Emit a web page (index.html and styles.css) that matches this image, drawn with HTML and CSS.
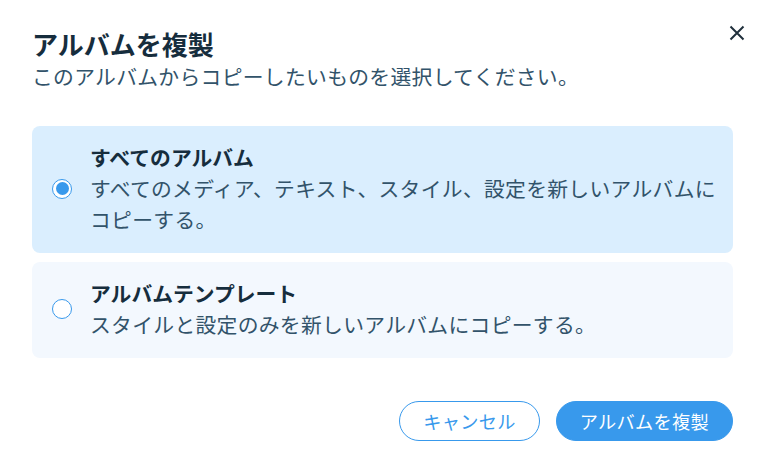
FILE: index.html
```html
<!DOCTYPE html>
<html lang="ja">
<head>
    <meta charset="UTF-8">
    <meta name="viewport" content="width=device-width, initial-scale=1.0">
    <title>アルバムを複製</title>
    <link rel="stylesheet" href="styles.css">
</head>
<body>

    <div class="dialog">
        <!-- Header -->
        <div class="dialog-header">
            <div class="header-text">
                <h1 class="dialog-title">アルバムを複製</h1>
                <p class="dialog-subtitle">このアルバムからコピーしたいものを選択してください。</p>
            </div>
            <button class="close-btn" aria-label="閉じる">
                <svg width="16" height="16" viewBox="0 0 16 16">
                    <path d="M1.5 1.5 L14.5 14.5 M14.5 1.5 L1.5 14.5" stroke="#20303c" stroke-width="2" fill="none"/>
                </svg>
            </button>
        </div>

        <!-- Options -->
        <div class="options">
            <label class="option option-selected">
                <span class="radio"><span class="radio-dot"></span></span>
                <span class="option-text">
                    <span class="option-title">すべてのアルバム</span>
                    <span class="option-desc">すべてのメディア、テキスト、スタイル、設定を新しいアルバムにコピーする。</span>
                </span>
            </label>
            <label class="option">
                <span class="radio"></span>
                <span class="option-text">
                    <span class="option-title">アルバムテンプレート</span>
                    <span class="option-desc">スタイルと設定のみを新しいアルバムにコピーする。</span>
                </span>
            </label>
        </div>

        <!-- Footer buttons -->
        <div class="dialog-footer">
            <a href="#" class="btn btn-secondary">キャンセル</a>
            <a href="#" class="btn btn-primary">アルバムを複製</a>
        </div>
    </div>

</body>
</html>
```

FILE: styles.css
```css
/* Reset default styles */
* {
    margin: 0;
    padding: 0;
    box-sizing: border-box;
}

body {
    font-family: "Noto Sans CJK JP", "Noto Sans", sans-serif;
    background-color: #ffffff;
    color: #162d3d;
    width: 764px;
    height: 470px;
    overflow: hidden;
}

/* Dialog container */
.dialog {
    padding: 27px 31px 0 32px;
}

/* Header */
.dialog-header {
    display: flex;
    justify-content: space-between;
    align-items: flex-start;
}

.dialog-title {
    font-size: 26px;
    font-weight: 700;
    line-height: 34px;
    color: #162d3d;
}

.dialog-subtitle {
    font-size: 20.8px;
    letter-spacing: 0.3px;
    line-height: 31px;
    color: #32536a;
}

.close-btn {
    background: none;
    border: none;
    cursor: pointer;
    width: 16px;
    height: 16px;
    margin-top: -2px;
    margin-right: -12px;
    display: flex;
}

/* Option cards */
.options {
    display: flex;
    flex-direction: column;
    gap: 9px;
    margin-top: 34px;
}

.option {
    display: flex;
    align-items: center;
    gap: 18px;
    padding: 16px 8px 18px 20px;
    border-radius: 8px;
    background-color: #f3f8fe;
    cursor: pointer;
}

.option-selected {
    background-color: #daeefe;
}

.option-text {
    display: flex;
    flex-direction: column;
}

.option-title {
    font-size: 20.8px;
    font-weight: 700;
    line-height: 31px;
    color: #162d3d;
}

.option-desc {
    font-size: 20.8px;
    letter-spacing: 0.3px;
    line-height: 31px;
    color: #32536a;
}

/* Radio buttons */
.radio {
    flex-shrink: 0;
    width: 20px;
    height: 20px;
    border: 1px solid #3899ec;
    border-radius: 50%;
    background-color: #ffffff;
    display: flex;
    align-items: center;
    justify-content: center;
}

.radio-dot {
    width: 13px;
    height: 13px;
    border-radius: 50%;
    background-color: #3899ec;
}

/* Footer */
.dialog-footer {
    display: flex;
    justify-content: flex-end;
    gap: 16px;
    margin-top: 43px;
}

.btn {
    height: 40px;
    padding: 0 23px;
    border-radius: 20px;
    font-size: 18.2px;
    letter-spacing: 0.3px;
    line-height: 38px;
    text-decoration: none;
    white-space: nowrap;
    display: inline-block;
    text-align: center;
}

.btn-secondary {
    border: 1px solid #3899ec;
    color: #3899ec;
    background-color: #ffffff;
}

.btn-primary {
    border: 1px solid #3899ec;
    color: #ffffff;
    background-color: #3899ec;
}
```
